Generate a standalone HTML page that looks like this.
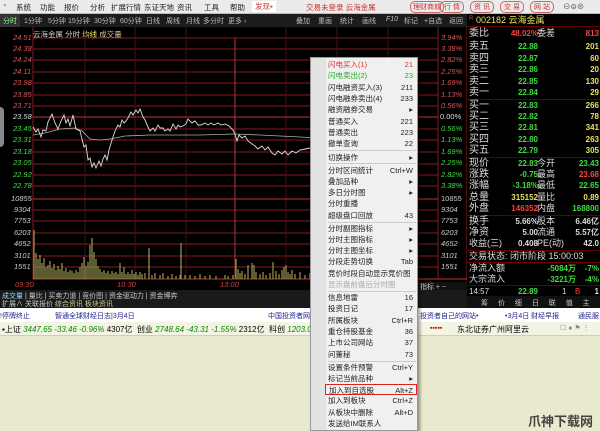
<!DOCTYPE html>
<html><head><meta charset="utf-8"><style>
*{margin:0;padding:0;box-sizing:border-box}
body{width:600px;height:431px;overflow:hidden;position:relative;background:#e9e9cd;font-family:"Liberation Sans","Noto Sans CJK SC",sans-serif;font-size:8px}
.a{position:absolute;white-space:nowrap}
#menu{left:0;top:0;width:600px;height:14px;background:#ebebeb;border-bottom:1px solid #bbb}
#menu span{position:absolute;top:2px;font-size:7.5px;color:#222}
#tabs{left:0;top:14px;width:467px;height:13px;background:#1c1c1c;color:#bbb}
#tabs span{position:absolute;top:2px;font-size:7px}
#chart{left:0;top:27px;width:467px;height:263px;background:#000}
.lab{position:absolute;font-size:7.5px;font-style:italic}
#rp{left:467px;top:14px;width:133px;height:296px;background:#000}
#rp .r{position:absolute;left:0;width:133px;height:11.5px;font-size:8px;line-height:11.5px}
#rp .r span{position:absolute;top:0}
#rp .r .L{font-size:10px;color:#ddd;left:2px}
#rp .r .L2{font-size:9px;color:#ddd;left:70px}
#rp .r .m{right:62px;font-weight:bold}
#rp .r .e{right:1px;font-weight:bold}
.y{color:#ddd}.g{color:#3fdc3f}.rd{color:#ff4040}.yl{color:#e8e060}
#cm{left:310px;top:57px;width:108px;height:374px;background:#f0f0f0;border:1px solid #999;box-shadow:2px 2px 3px rgba(0,0,0,.4)}
#cm .ic{position:absolute;left:0;top:0;width:15px;height:100%;background:#e2e2e2}
#cm .i{position:absolute;left:17px;width:88px;font-size:7.5px;color:#222;height:11px;line-height:11px}
#cm .i b{position:absolute;right:3px;font-weight:normal}
#cm .s{position:absolute;left:17px;width:88px;height:1px;background:#ccc}
</style></head><body>
<div class="a" id="menu">
<span style="left:2px;top:1px;color:#36c">◔</span>
<span style="left:16px">系统</span><span style="left:40px">功能</span><span style="left:64px">报价</span><span style="left:90px">分析</span><span style="left:111px">扩展行情</span><span style="left:144px">东证天地</span><span style="left:177px">资讯</span><span style="left:204px">工具</span><span style="left:230px">帮助</span>
<span style="left:252px;color:#c33;background:#fff;padding:0 3px;top:1px">发现▪</span>
<span style="left:306px;color:#c33">交易未登录 云海金属</span>
<span style="left:410px;color:#c33;border:1px solid #c66;border-radius:5px;padding:0 2px;top:1px;font-size:7px">理财商城</span>
<span style="left:440px;color:#c33;border:1px solid #c66;border-radius:5px;padding:0 3px;top:1px;font-size:7px">行 情</span>
<span style="left:470px;color:#c33;border:1px solid #c66;border-radius:5px;padding:0 3px;top:1px;font-size:7px">资 讯</span>
<span style="left:500px;color:#c33;border:1px solid #c66;border-radius:5px;padding:0 3px;top:1px;font-size:7px">交 易</span>
<span style="left:530px;color:#c33;border:1px solid #c66;border-radius:5px;padding:0 3px;top:1px;font-size:7px">网 站</span>
<span style="left:563px;top:1px;color:#555">⊖⊜⊗</span>
</div>
<div class="a" id="tabs">
<span style="left:0;width:20px;height:13px;top:0;padding-top:2px;padding-left:3px;background:#333;color:#8f8">分时</span>
<span style="left:24px">1分钟</span><span style="left:48px">5分钟</span><span style="left:68px">15分钟</span><span style="left:94px">30分钟</span><span style="left:120px">60分钟</span><span style="left:146px">日线</span><span style="left:166px">周线</span><span style="left:186px">月线</span><span style="left:203px">多分时</span><span style="left:228px">更多 ›</span>
<span style="left:296px">叠加</span><span style="left:318px">重画</span><span style="left:340px">统计</span><span style="left:362px">画线</span><span style="left:386px;font-style:italic">F10</span><span style="left:404px">标记</span><span style="left:424px">+自选</span><span style="left:449px">返回</span>
</div>
<div class="a" id="chart">
<div style="position:absolute;left:0;top:80px;width:4px;height:40px;background:#888;border-radius:0 4px 4px 0"></div>
<div style="position:absolute;left:33px;top:2px;font-size:7.5px;color:#ccc">云海金属 <span style="color:#ddd">分时</span> <span style="color:#ee6">均线</span> <span style="color:#cc9">成交量</span></div>
<svg width="467" height="263" style="position:absolute;left:0;top:0">
<g stroke="#8a1a1a" stroke-width="1">
<line x1="33" y1="11" x2="438" y2="11"/><line x1="33" y1="22" x2="438" y2="22"/><line x1="33" y1="33" x2="438" y2="33"/><line x1="33" y1="45" x2="438" y2="45"/><line x1="33" y1="56" x2="438" y2="56"/><line x1="33" y1="68" x2="438" y2="68"/><line x1="33" y1="79" x2="438" y2="79"/>
<line x1="33" y1="102" x2="438" y2="102"/><line x1="33" y1="113" x2="438" y2="113"/><line x1="33" y1="125" x2="438" y2="125"/><line x1="33" y1="137" x2="438" y2="137"/><line x1="33" y1="148" x2="438" y2="148"/><line x1="33" y1="159" x2="438" y2="159"/>
<line x1="33" y1="183" x2="438" y2="183"/><line x1="33" y1="194" x2="438" y2="194"/><line x1="33" y1="206" x2="438" y2="206"/><line x1="33" y1="217" x2="438" y2="217"/><line x1="33" y1="229" x2="438" y2="229"/><line x1="33" y1="240" x2="438" y2="240"/>
<line x1="33" y1="0" x2="33" y2="252"/><line x1="438" y1="0" x2="438" y2="252"/><line x1="467" y1="0" x2="467" y2="263"/>
</g>
<g stroke="#4a1010"><line x1="85" y1="0" x2="85" y2="252"/><line x1="135" y1="0" x2="135" y2="252"/><line x1="186" y1="0" x2="186" y2="252"/><line x1="286" y1="0" x2="286" y2="252"/><line x1="337" y1="0" x2="337" y2="252"/><line x1="388" y1="0" x2="388" y2="252"/></g>
<g stroke="#c03030"><line x1="33" y1="90" x2="438" y2="90"/><line x1="33" y1="172" x2="438" y2="172"/><line x1="33" y1="252" x2="467" y2="252"/><line x1="235" y1="11" x2="235" y2="252"/></g>
<polyline fill="none" stroke="#b0b0a0" stroke-width="0.8" points="33,108 45,106 60,102 75,101 82,104 90,112 100,113 110,112 125,109 150,108 200,108 235,107 260,108 300,110 330,112 360,113"/>
<polyline fill="none" stroke="#ddd" stroke-width="0.9" points="33,100 36,105 38,102 41,110 43,103 46,104 48,95 52,87 55,96 58,102 61,94 64,88 66,96 68,92 70,99 73,88 76,102 80,104 84,120 86,118 88,133 90,131 92,140 94,136 96,141 99,134 101,139 103,132 105,128 107,133 109,123 112,113 115,104 118,98 120,100 122,93 124,96 126,94 128,91 131,85 133,88 136,83 138,86 140,82 143,90 145,93 148,100 150,104 153,101 155,104 158,98 160,101 163,101 165,104 168,102 170,104 173,97 176,102 178,98 180,100 183,99 186,97 188,92 192,96 195,94 198,98 201,98 205,96 208,98 211,96 214,98 218,96 221,98 225,97 229,99 233,103 235,107 237,114 239,108 242,111 245,109 248,114 252,117 255,119 258,122 262,119 265,123 268,120 272,126 275,128 278,124 282,127 285,124 288,128 292,124 296,126 300,123 305,122 310,121"/>
<path stroke="#9a9a55" stroke-width="1.2" d="M34 252V203M36 252V226M38 252V232M40 252V228M42 252V236M44 252V231M46 252V240M48 252V238M50 252V234M52 252V241M54 252V237M56 252V243M58 252V239M60 252V242M62 252V236M64 252V244M66 252V241M68 252V245M70 252V243M72 252V244M74 252V246M76 252V243M78 252V245M80 252V240M82 252V236M84 252V230M86 252V239M88 252V235M90 252V218M92 252V211M94 252V225M96 252V232M98 252V239M100 252V242M102 252V245M104 252V243M106 252V246M108 252V244M110 252V247M112 252V244M114 252V246M116 252V245M118 252V247M120 252V236M122 252V245M124 252V240M126 252V247M128 252V245M130 252V247M132 252V243M134 252V247M136 252V245M138 252V248M140 252V245M142 252V247M145 252V246M149 252V221M152 252V248M155 252V246M160 252V248M163 252V246M168 252V249M172 252V247M176 252V249M180 252V248M181 252V216M185 252V248M190 252V248M195 252V249M200 252V247M205 252V249M210 252V248M216 252V249M225 252V248M228 252V249M233 252V248M236 252V232M238 252V242M240 252V246M242 252V244M245 252V247M248 252V238M252 252V236M254 252V238M256 252V245M260 252V247M263 252V245M266 252V248M270 252V246M273 252V235M276 252V244M279 252V247M282 252V243M284 252V240M286 252V238M288 252V245M290 252V247M292 252V243M295 252V247M300 252V245M305 252V248M310 252V246"/>
</svg>
<div class="lab" style="left:13px;top:6px;color:#d55">24.51</div><div class="lab" style="left:13px;top:17px;color:#d55">24.38</div><div class="lab" style="left:13px;top:28px;color:#d55">24.24</div><div class="lab" style="left:13px;top:40px;color:#d55">24.11</div><div class="lab" style="left:13px;top:51px;color:#d55">23.98</div><div class="lab" style="left:13px;top:63px;color:#d55">23.85</div><div class="lab" style="left:13px;top:74px;color:#d55">23.71</div><div class="lab" style="left:13px;top:85px;color:#ddd">23.58</div><div class="lab" style="left:13px;top:97px;color:#4d4">23.45</div><div class="lab" style="left:13px;top:108px;color:#4d4">23.31</div><div class="lab" style="left:13px;top:120px;color:#4d4">23.18</div><div class="lab" style="left:13px;top:131px;color:#4d4">23.05</div><div class="lab" style="left:13px;top:143px;color:#4d4">22.92</div><div class="lab" style="left:13px;top:154px;color:#4d4">22.78</div>
<div class="lab" style="left:11px;top:167px;color:#ccc">10855</div><div class="lab" style="left:14px;top:178px;color:#ccc">9304</div><div class="lab" style="left:14px;top:189px;color:#ccc">7753</div><div class="lab" style="left:14px;top:201px;color:#ccc">6203</div><div class="lab" style="left:14px;top:212px;color:#ccc">4652</div><div class="lab" style="left:14px;top:224px;color:#ccc">3101</div><div class="lab" style="left:14px;top:235px;color:#ccc">1551</div>
<div class="lab" style="left:15px;top:253px;color:#c44">09:30</div><div class="lab" style="left:117px;top:253px;color:#c44">10:30</div><div class="lab" style="left:220px;top:253px;color:#c44">13:00</div><div class="lab" style="left:420px;top:253px;color:#c44">15:00</div>
<div class="lab" style="left:441px;top:6px;color:#d55">3.94%</div><div class="lab" style="left:441px;top:17px;color:#d55">3.38%</div><div class="lab" style="left:441px;top:28px;color:#d55">2.82%</div><div class="lab" style="left:441px;top:40px;color:#d55">2.25%</div><div class="lab" style="left:441px;top:51px;color:#d55">1.69%</div><div class="lab" style="left:441px;top:63px;color:#d55">1.13%</div><div class="lab" style="left:441px;top:74px;color:#d55">0.56%</div><div class="lab" style="left:440px;top:85px;color:#ddd;font-style:normal">0.00%</div><div class="lab" style="left:441px;top:97px;color:#4d4">0.56%</div><div class="lab" style="left:441px;top:108px;color:#4d4">1.13%</div><div class="lab" style="left:441px;top:120px;color:#4d4">1.69%</div><div class="lab" style="left:441px;top:131px;color:#4d4">2.25%</div><div class="lab" style="left:441px;top:143px;color:#4d4">2.82%</div><div class="lab" style="left:441px;top:154px;color:#4d4">3.38%</div>
<div class="lab" style="left:441px;top:167px;color:#ccc;font-style:normal">10855</div><div class="lab" style="left:441px;top:178px;color:#ccc">9304</div><div class="lab" style="left:441px;top:189px;color:#ccc">7753</div><div class="lab" style="left:441px;top:201px;color:#ccc">6203</div><div class="lab" style="left:441px;top:212px;color:#ccc">4652</div><div class="lab" style="left:441px;top:224px;color:#ccc">3101</div><div class="lab" style="left:441px;top:235px;color:#ccc">1551</div>
<div class="a" style="left:418px;top:255px;width:49px;height:10px;background:#111;color:#ccc;font-size:7px">&nbsp;指标 + −</div>
</div>
<div class="a" style="left:0;top:290px;width:310px;height:18px;background:#1a1a1a;font-size:7px;color:#ccc">
<div class="a" style="left:2px;top:1px"><span style="color:#8df">成交量</span> | 量比 | 买卖力道 | 竞价图 | 资金驱动力 | 资金博弈</div>
<div class="a" style="left:2px;top:9px">扩展∧ 关联报价 <span style="color:#cc9">综合资讯 板块资讯</span></div>
</div>
<div class="a" style="left:418px;top:290px;width:49px;height:18px;background:#1a1a1a"></div>
<div class="a" id="rp">
<div class="r" style="top:0;height:13px;border-bottom:1px solid #600"><span style="left:2px;color:#e44;font-size:6px">R</span><span style="left:9px;top:1px;font-size:9px" class="yl">002182 云海金属</span></div>
<div class="r" style="top:14px"><span class="L">委比</span><span class="m rd">48.02%</span><span class="L2">委差</span><span class="e rd">813</span></div>
<div class="r" style="top:27px"><span class="L">卖五</span><span class="m g">22.88</span><span class="e yl">201</span></div>
<div class="r" style="top:38.5px"><span class="L">卖四</span><span class="m g">22.87</span><span class="e yl">60</span></div>
<div class="r" style="top:50px"><span class="L">卖三</span><span class="m g">22.86</span><span class="e yl">20</span></div>
<div class="r" style="top:61.5px"><span class="L">卖二</span><span class="m g">22.85</span><span class="e yl">130</span></div>
<div class="r" style="top:73px"><span class="L">卖一</span><span class="m g">22.84</span><span class="e yl">29</span></div>
<div class="r" style="top:85px;border-top:1px solid #600"><span class="L">买一</span><span class="m g">22.83</span><span class="e yl">266</span></div>
<div class="r" style="top:96.5px"><span class="L">买二</span><span class="m g">22.82</span><span class="e yl">78</span></div>
<div class="r" style="top:108px"><span class="L">买三</span><span class="m g">22.81</span><span class="e yl">341</span></div>
<div class="r" style="top:119.5px"><span class="L">买四</span><span class="m g">22.80</span><span class="e yl">263</span></div>
<div class="r" style="top:131px"><span class="L">买五</span><span class="m g">22.79</span><span class="e yl">305</span></div>
<div class="r" style="top:143px;border-top:1px solid #600"><span class="L">现价</span><span class="m g">22.83</span><span class="L2">今开</span><span class="e g">23.43</span></div>
<div class="r" style="top:154.5px"><span class="L">涨跌</span><span class="m g">-0.75</span><span class="L2">最高</span><span class="e rd">23.68</span></div>
<div class="r" style="top:166px"><span class="L">涨幅</span><span class="m g">-3.18%</span><span class="L2">最低</span><span class="e g">22.65</span></div>
<div class="r" style="top:177.5px"><span class="L">总量</span><span class="m yl">315152</span><span class="L2">量比</span><span class="e yl">0.89</span></div>
<div class="r" style="top:189px"><span class="L">外盘</span><span class="m rd">146352</span><span class="L2">内盘</span><span class="e g">168800</span></div>
<div class="r" style="top:201px;border-top:1px solid #600"><span class="L">换手</span><span class="m y">5.66%</span><span class="L2">股本</span><span class="e y">6.46亿</span></div>
<div class="r" style="top:212.5px"><span class="L">净资</span><span class="m y">5.00</span><span class="L2">流通</span><span class="e y">5.57亿</span></div>
<div class="r" style="top:224px"><span class="L" style="font-size:9px">收益(三)</span><span class="m y">0.408</span><span class="L2">PE(动)</span><span class="e y">42.0</span></div>
<div class="r" style="top:236px;border-top:1px solid #600"><span class="L" style="font-size:9px">交易状态: 闭市阶段 15:00:03</span></div>
<div class="r" style="top:248px;border-top:1px solid #600"><span class="L" style="font-size:9px">净流入额</span><span class="g" style="right:24px;font-weight:bold">-5084万</span><span class="e g">-7%</span></div>
<div class="r" style="top:259.5px"><span class="L" style="font-size:9px">大宗流入</span><span class="g" style="right:24px;font-weight:bold">-3221万</span><span class="e g">-4%</span></div>
<div class="r" style="top:271px;border-top:1px solid #600"><span class="y" style="left:2px">14:57</span><span class="m g">22.89</span><span class="y" style="left:95px">1</span><span class="rd" style="left:108px">B</span><span class="e y">1</span></div>
<div class="r" style="top:282.5px"><span class="y" style="left:2px">15:00</span><span class="m g">22.83</span><span style="left:86px;color:#c4c">3568</span><span class="e y">409</span></div>
</div>
<div class="a" style="left:467px;top:296px;width:133px;height:12px;background:#111;color:#ccc;font-size:7px;word-spacing:8px;padding-left:14px;padding-top:2px">筹 价 细 日 联 值 主 筹</div>
<div class="a" style="left:0;top:308px;width:600px;height:14px;background:#fff;color:#228;font-size:7px">
<span class="a" style="left:0;top:3px">!停牌终止</span><span class="a" style="left:55px;top:3px">智通全球财经日志|3月4日</span><span class="a" style="left:268px;top:3px">中国投资者网</span><span class="a" style="left:420px;top:3px">投资者自己的网站•</span><span class="a" style="left:505px;top:3px">•3月4日 财经早报</span><span class="a" style="left:578px;top:3px">通民服</span>
</div>
<div class="a" style="left:0;top:322px;width:600px;height:14px;background:#f4f4e4;font-size:7px;border-bottom:1px solid #ccc">
<span class="a" style="left:2px;top:2px;font-size:8px">▪上证 <i style="color:#080">3447.65 -33.46 -0.96%</i> 4307亿 &nbsp;创业 <i style="color:#080">2748.64 -43.31 -1.55%</i> 2312亿 &nbsp;科创 <i style="color:#080">1203.09</i></span>
<span class="a" style="left:430px;top:3px;color:#c00">▪▪▪▪▪</span><span class="a" style="left:457px;top:2px;font-size:8px">东北证券广州阿里云</span><span class="a" style="left:560px;top:2px;color:#888">☐ ● ⚑ ⋮</span>
</div>
<div class="a" style="left:528px;top:411px;font-size:13px;color:#444;font-weight:bold">爪神下载网</div>
<div class="a" id="cm"><div class="ic"></div>
<div class="i" style="top:1px;color:#d33">闪电买入(1)<b>21</b></div>
<div class="i" style="top:12.3px;color:#2a2">闪电卖出(2)<b>23</b></div>
<div class="i" style="top:23.6px">闪电融资买入(3)<b>211</b></div>
<div class="i" style="top:34.9px">闪电融券卖出(4)<b>233</b></div>
<div class="i" style="top:46.2px">融资融券交易<b>▸</b></div>
<div class="i" style="top:57.5px">普通买入<b>221</b></div>
<div class="i" style="top:68.8px">普通卖出<b>223</b></div>
<div class="i" style="top:80.1px">撤单查询<b>22</b></div>
<div class="s" style="top:92px"></div>
<div class="i" style="top:93.5px">切换操作<b>▸</b></div>
<div class="s" style="top:105px"></div>
<div class="i" style="top:106.5px">分时区间统计<b>Ctrl+W</b></div>
<div class="i" style="top:117.8px">叠加品种<b>▸</b></div>
<div class="i" style="top:129.1px">多日分时图<b>▸</b></div>
<div class="i" style="top:140.4px">分时重播</div>
<div class="i" style="top:151.7px">超级盘口回放<b>43</b></div>
<div class="s" style="top:163.5px"></div>
<div class="i" style="top:164.5px">分时副图指标<b>▸</b></div>
<div class="i" style="top:175.8px">分时主图指标<b>▸</b></div>
<div class="i" style="top:187.1px">分时主图坐标<b>▸</b></div>
<div class="i" style="top:198.4px">分段走势切换<b>Tab</b></div>
<div class="i" style="top:209.7px">竞价时段自动显示竞价图</div>
<div class="i" style="top:221px;color:#aaa">显示盘前盘后分时图</div>
<div class="s" style="top:233px"></div>
<div class="i" style="top:234px">信息地雷<b>16</b></div>
<div class="i" style="top:245.3px">投资日记<b>17</b></div>
<div class="i" style="top:256.6px">所属板块<b>Ctrl+R</b></div>
<div class="i" style="top:267.9px">重仓持股基金<b>36</b></div>
<div class="i" style="top:279.2px">上市公司网站<b>37</b></div>
<div class="i" style="top:290.5px">问董秘<b>73</b></div>
<div class="s" style="top:302.5px"></div>
<div class="i" style="top:303.5px">设置条件预警<b>Ctrl+Y</b></div>
<div class="i" style="top:314.8px">标记当前品种<b>▸</b></div>
<div class="i" style="top:326.1px;left:14px;width:92px;padding-left:3px;border:1px solid #d22">加入到自选股<b>Alt+Z</b></div>
<div class="i" style="top:337.4px">加入到板块<b>Ctrl+Z</b></div>
<div class="i" style="top:348.7px">从板块中删除<b>Alt+D</b></div>
<div class="i" style="top:360px">发送给IM联系人</div>
</div>
</body></html>
